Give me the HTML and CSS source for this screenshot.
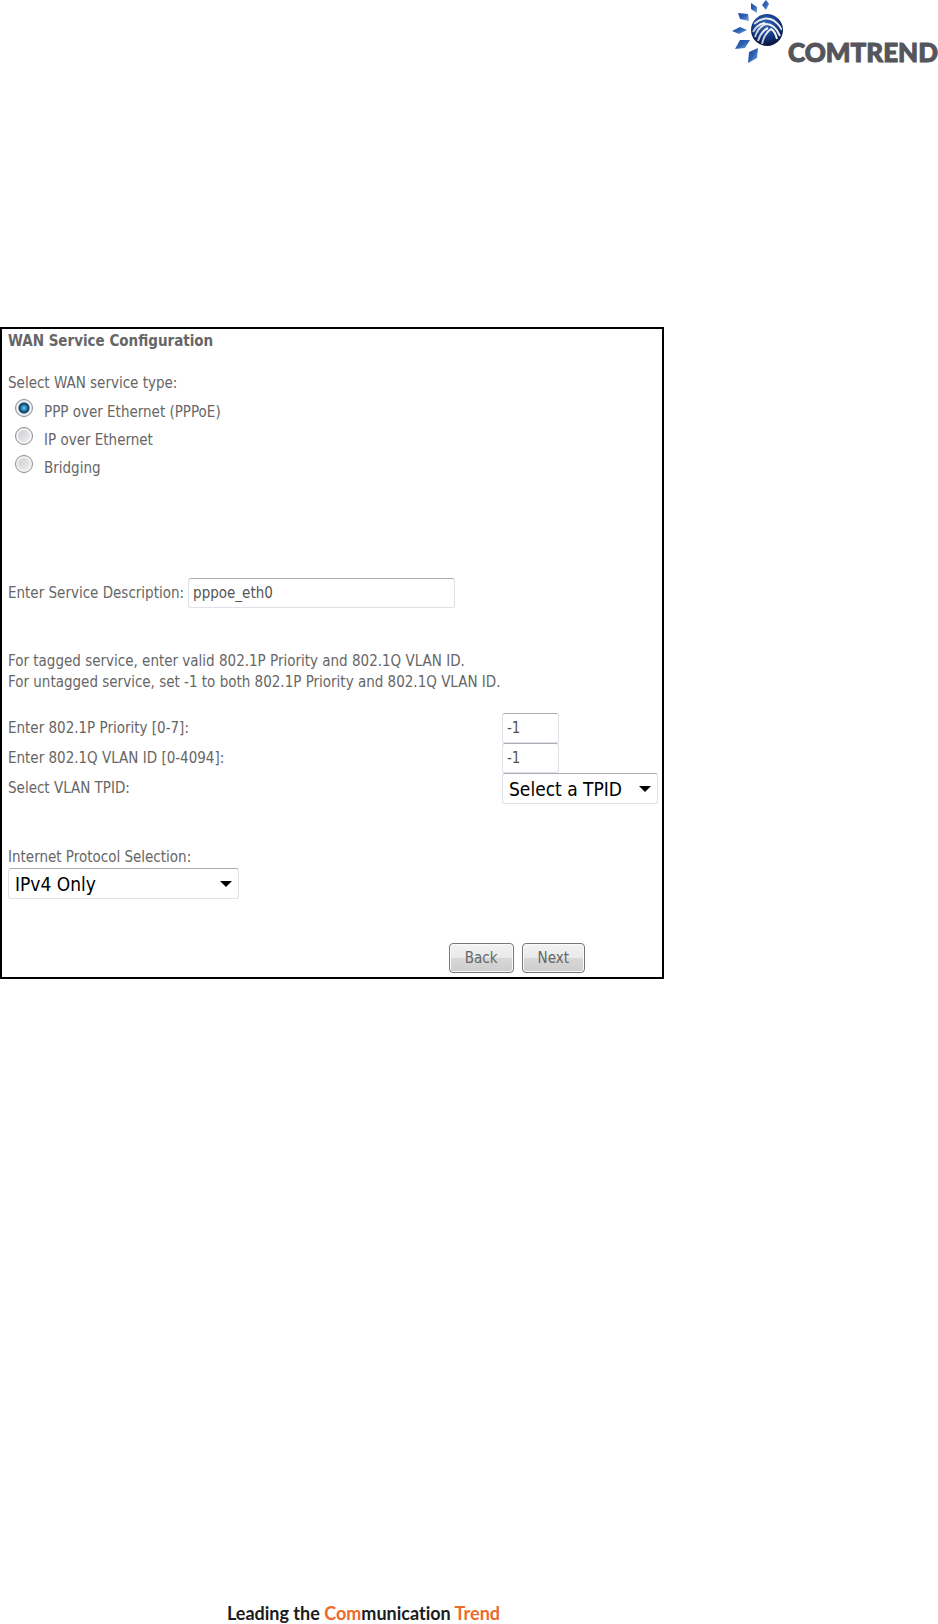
FILE: index.html
```
<!DOCTYPE html>
<html lang="en">
<head>
    <meta charset="UTF-8">
    <meta name="viewport" content="width=device-width, initial-scale=1.0">
    <title>WAN Service Configuration</title>
    <link rel="stylesheet" href="styles.css">
</head>
<body>
    <header class="header">
        <svg class="logo" width="54" height="64" viewBox="0 0 54 64" aria-hidden="true">
            <defs>
                <radialGradient id="globe" cx="45%" cy="30%" r="70%">
                    <stop offset="0" stop-color="#3567b8"/>
                    <stop offset="0.55" stop-color="#143b88"/>
                    <stop offset="1" stop-color="#06143c"/>
                </radialGradient>
                <linearGradient id="ray" x1="0" y1="0" x2="1" y2="1">
                    <stop offset="0" stop-color="#1c459b"/>
                    <stop offset="0.5" stop-color="#2f62b5"/>
                    <stop offset="1" stop-color="#86aee0"/>
                </linearGradient>
                <linearGradient id="band" x1="1" y1="0" x2="0" y2="1">
                    <stop offset="0" stop-color="#ffffff"/>
                    <stop offset="1" stop-color="#b9c2d2"/>
                </linearGradient>
                <clipPath id="disc">
                    <circle cx="38" cy="30" r="15"/>
                </clipPath>
            </defs>
            <g fill="url(#ray)">
                <path d="M37 0 L40 4 L37 10 L33 5 Z"/>
                <path d="M22 3 L28 7 L28 13 L22 9 Z"/>
                <path d="M9 13 L19 14 L20 21 L11 19 Z"/>
                <path d="M3 31 L11 27 L18 30 L10 34 Z"/>
                <path d="M11 40 L21 40 L16 48 L6 49 Z"/>
                <path d="M20 52 L29 48 L28 58 L19 63 Z"/>
            </g>
            <circle cx="38" cy="30" r="16" fill="url(#globe)"/>
            <g fill="none" stroke="url(#band)" stroke-width="2" clip-path="url(#disc)">
                <path d="M25 24 Q33 17 41 19 Q48 21 53 30"/>
                <path d="M24 32 Q28 24 36 23"/>
                <path d="M26 37 Q29 27 37 24 Q46 24 51 36"/>
                <path d="M29 41 Q32 31 39 28"/>
                <path d="M33 44 Q35 34 42 29 Q46 31 48 39"/>
            </g>
        </svg>
        <span class="brand">COMTREND</span>
    </header>

    <form class="panel">
        <h1 class="title">WAN Service Configuration</h1>

        <fieldset class="service-type">
            <legend>Select WAN service type:</legend>
            <div class="radio-row">
                <input type="radio" name="service" id="pppoe" checked>
                <label for="pppoe">PPP over Ethernet (PPPoE)</label>
            </div>
            <div class="radio-row">
                <input type="radio" name="service" id="ipoe">
                <label for="ipoe">IP over Ethernet</label>
            </div>
            <div class="radio-row">
                <input type="radio" name="service" id="bridging">
                <label for="bridging">Bridging</label>
            </div>
        </fieldset>

        <div class="description">
            <label for="desc">Enter Service Description:</label>
            <input type="text" id="desc" value="pppoe_eth0">
        </div>

        <p class="note">
            For tagged service, enter valid 802.1P Priority and 802.1Q VLAN ID.<br>
            For untagged service, set -1 to both 802.1P Priority and 802.1Q VLAN ID.
        </p>

        <div class="vlan">
            <label for="priority">Enter 802.1P Priority [0-7]:</label>
            <input type="text" id="priority" value="-1">
            <label for="vlan_id">Enter 802.1Q VLAN ID [0-4094]:</label>
            <input type="text" id="vlan_id" value="-1">
            <label for="tpid">Select VLAN TPID:</label>
            <select id="tpid">
                <option>Select a TPID</option>
            </select>
        </div>

        <div class="protocol">
            <label for="protocol">Internet Protocol Selection:</label>
            <select id="protocol">
                <option>IPv4 Only</option>
            </select>
        </div>

        <div class="buttons">
            <button type="button">Back</button>
            <button type="button">Next</button>
        </div>
    </form>

    <footer class="footer">Leading the <span>Com</span>munication <span>Trend</span></footer>
</body>
</html>
```
FILE: styles.css
```
* {
    box-sizing: border-box;
}
body {
    margin: 0;
    min-height: 100vh;
    display: flex;
    flex-direction: column;
    background: #fff;
    color: #666;
    font-family: "DejaVu Sans Condensed", Tahoma, sans-serif;
    font-size: 15px;
    line-height: 21px;
}
.header {
    display: flex;
    justify-content: flex-end;
    align-items: flex-end;
    gap: 5px;
    margin-bottom: 263px;
}
.logo {
    flex: none;
}
.brand {
    padding-bottom: 2px;
    color: #54565b;
    font-family: Lato, sans-serif;
    font-size: 26px;
    font-weight: 900;
    line-height: 20px;
    -webkit-text-stroke: 1px #54565b;
}
.panel {
    width: 71%;
    max-width: 664px;
    min-height: 650px;
    padding: 2px 4px 4px 6px;
    border: 2px solid #000;
}
.title {
    margin: 0 0 21px;
    font-size: 15px;
    line-height: 21px;
}
.service-type {
    margin: 0;
    padding: 0;
    border: 0;
}
.service-type legend {
    padding: 0;
}
.radio-row {
    display: flex;
    align-items: center;
    height: 28px;
    padding-left: 7px;
}
.radio-row label {
    padding-top: 8px;
}
input[type="radio"] {
    appearance: none;
    width: 18px;
    height: 18px;
    margin: 0 11px 0 0;
    border: 1px solid #8c8f92;
    border-radius: 50%;
    background: linear-gradient(135deg, #c6c9cc, #f4f4f4);
    box-shadow: inset 0 0 0 2px #f4f4f4;
}
input[type="radio"]:checked {
    background: radial-gradient(circle at 50% 50%, #8fdcf8 0, #2f8ec0 2px, #0c3c60 5px, #e8eef2 6px);
    box-shadow: none;
}
input[type="text"],
select {
    border: 1px solid #dde1e8;
    border-top-color: #abadb3;
    border-radius: 3px;
    background-color: #fff;
    font-family: inherit;
}
input[type="text"] {
    height: 30px;
    padding: 0 4px;
    color: #555;
    font-size: 15px;
}
select {
    appearance: none;
    height: 31px;
    padding: 0 28px 0 6px;
    background-image: url("data:image/svg+xml,%3Csvg xmlns='http://www.w3.org/2000/svg' width='12' height='6'%3E%3Cpath d='M0 0h12L6 6z'/%3E%3C/svg%3E");
    background-repeat: no-repeat;
    background-position: right 6px center;
    color: #000;
    font-size: 19px;
}
.description {
    display: flex;
    align-items: center;
    gap: 4px;
    margin-top: 100px;
}
.description input {
    width: 267px;
}
.note {
    margin: 43px 0 20px;
}
.vlan {
    display: grid;
    grid-template-columns: 1fr 156px;
    align-items: center;
    justify-items: start;
}
.vlan input {
    width: 57px;
}
.vlan select {
    width: 100%;
}
.protocol {
    display: flex;
    flex-direction: column;
    align-items: flex-start;
    margin-top: 43px;
}
.protocol select {
    width: 231px;
}
.buttons {
    display: flex;
    justify-content: flex-end;
    gap: 8px;
    margin-top: 44px;
    padding-right: 73px;
}
button {
    height: 30px;
    padding: 0 15px;
    border: 1px solid #777;
    border-radius: 4px;
    background: linear-gradient(#f3f3f3, #e9e9e9 50%, #d8d8d8 50%, #cdcdcd);
    box-shadow: inset 0 0 0 1px #fafafa;
    color: #666;
    font-family: inherit;
    font-size: 15px;
}
.footer {
    width: 500px;
    margin-top: auto;
    color: #1c1c1c;
    font-family: Lato, sans-serif;
    font-size: 18px;
    font-weight: 700;
    font-variant-ligatures: none;
    line-height: 22px;
    text-align: right;
}
.footer span {
    color: #ec6a2c;
}
```
